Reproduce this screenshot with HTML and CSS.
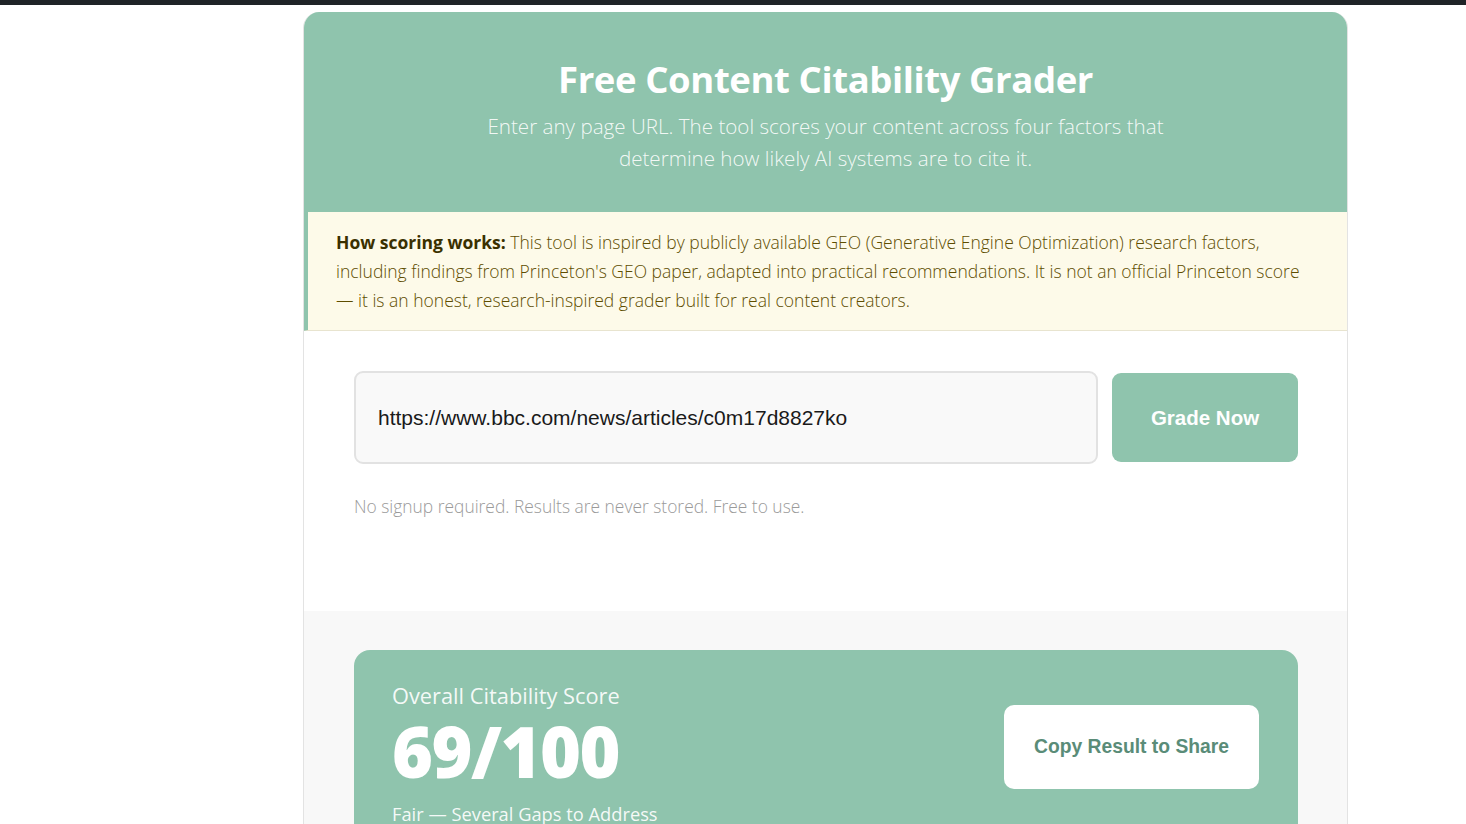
FILE: index.html
```html
<!DOCTYPE html>
<html lang="en">
<head>
<meta charset="utf-8">
<title>Free Content Citability Grader</title>
<link rel="stylesheet" href="styles.css">
</head>
<body>
<div class="topbar"></div>
<div class="page">
  <main class="card">
    <header class="hero">
      <h1 class="hero-title">Free Content Citability Grader</h1>
      <p class="hero-sub">Enter any page URL. The tool scores your content across four factors that determine how likely AI systems are to cite it.</p>
    </header>
    <section class="notice">
      <p><strong>How scoring works:</strong> This tool is inspired by publicly available GEO (Generative Engine Optimization) research factors, including findings from Princeton's GEO paper, adapted into practical recommendations. It is not an official Princeton score — it is an honest, research-inspired grader built for real content creators.</p>
    </section>
    <section class="form-area">
      <form class="url-form">
        <input class="url-input" type="text" value="https://www.bbc.com/news/articles/c0m17d8827ko">
        <button class="grade-btn" type="button">Grade Now</button>
      </form>
      <p class="form-note">No signup required. Results are never stored. Free to use.</p>
    </section>
    <section class="results">
      <div class="score-card">
        <div class="score-info">
          <div class="score-label">Overall Citability Score</div>
          <div class="score-value">69/100</div>
          <div class="score-verdict">Fair — Several Gaps to Address</div>
        </div>
        <button class="copy-btn" type="button">Copy Result to Share</button>
      </div>
    </section>
  </main>
</div>
</body>
</html>
```

FILE: styles.css
```css
* { box-sizing: border-box; }
html, body { margin: 0; padding: 0; background: #ffffff; }
body { font-family: "Open Sans", "Noto Sans", sans-serif; overflow: hidden; height: 824px; }

.topbar { height: 5px; background: #1f2327; }

.page { padding: 7px 0 0 303px; }

.card {
  width: 1045px;
  border: 1px solid #e3e3e3;
  border-top: none;
  border-radius: 16px 16px 0 0;
  overflow: hidden;
  background: #fff;
}

.hero {
  background: #8fc4ad;
  margin: 0 -1px;
  height: 200px;
  padding-top: 42px;
  text-align: center;
  color: #fff;
}
.hero-title {
  margin: 0;
  font-size: 36.5px;
  font-weight: 700;
  line-height: 50px;
  letter-spacing: -0.4px;
}
.hero-sub {
  margin: 6px auto 0;
  max-width: 720px;
  font-size: 20.6px;
  font-weight: 300;
  line-height: 32px;
  color: rgba(255,255,255,0.9);
}

.notice {
  background: #fdfae9;
  border-left: 5px solid #8fc4ad;
  border-bottom: 1px solid #e8e4cf;
  margin-left: -1px;
  padding: 16px 28px 15px 28px;
}
.notice p {
  margin: 0;
  font-size: 17.5px;
  font-weight: 300;
  line-height: 29px;
  color: #5e4d00;
}
.notice strong { font-weight: 700; color: #3a3000; }

.form-area { padding: 40px 49px 0 50px; height: 280px; }
.url-form { display: flex; gap: 14px; align-items: center; }
.url-input {
  flex: 1;
  height: 93px;
  border: 2px solid #e2e2e2;
  border-radius: 9px;
  background: #f9f9f9;
  padding: 0 22px;
  font-family: "Liberation Sans", Arial, sans-serif;
  font-size: 21px;
  color: #1a1a1a;
  outline: none;
}
.grade-btn {
  width: 186px;
  height: 89px;
  border: none;
  border-radius: 9px;
  background: #8fc4ad;
  color: #fff;
  font-family: "Liberation Sans", Arial, sans-serif;
  font-size: 20.5px;
  font-weight: 700;
}
.form-note {
  margin: 30px 0 0;
  font-size: 17.4px;
  font-weight: 300;
  color: #9a9a9a;
}

.results { background: #f8f8f8; padding: 39px 49px 40px 50px; height: 240px; }
.score-card {
  background: #8fc4ad;
  border-radius: 16px;
  padding: 30px 39px 30px 38px;
  display: flex;
  justify-content: space-between;
  align-items: center;
  color: #fff;
}
.score-label { font-size: 21.8px; line-height: 32px; color: rgba(255,255,255,0.92); }
.score-value { font-size: 70px; font-weight: 800; line-height: 76px; margin-top: 1px; letter-spacing: -1.5px; }
.score-verdict { font-size: 18.3px; line-height: 26px; margin-top: 12px; color: rgba(255,255,255,0.92); }
.copy-btn {
  width: 255px;
  height: 84px;
  border: none;
  border-radius: 10px;
  background: #fff;
  color: #5a8c78;
  font-family: "Liberation Sans", Arial, sans-serif;
  font-size: 19.3px;
  font-weight: 700;
  margin-top: -14px;
}
```
